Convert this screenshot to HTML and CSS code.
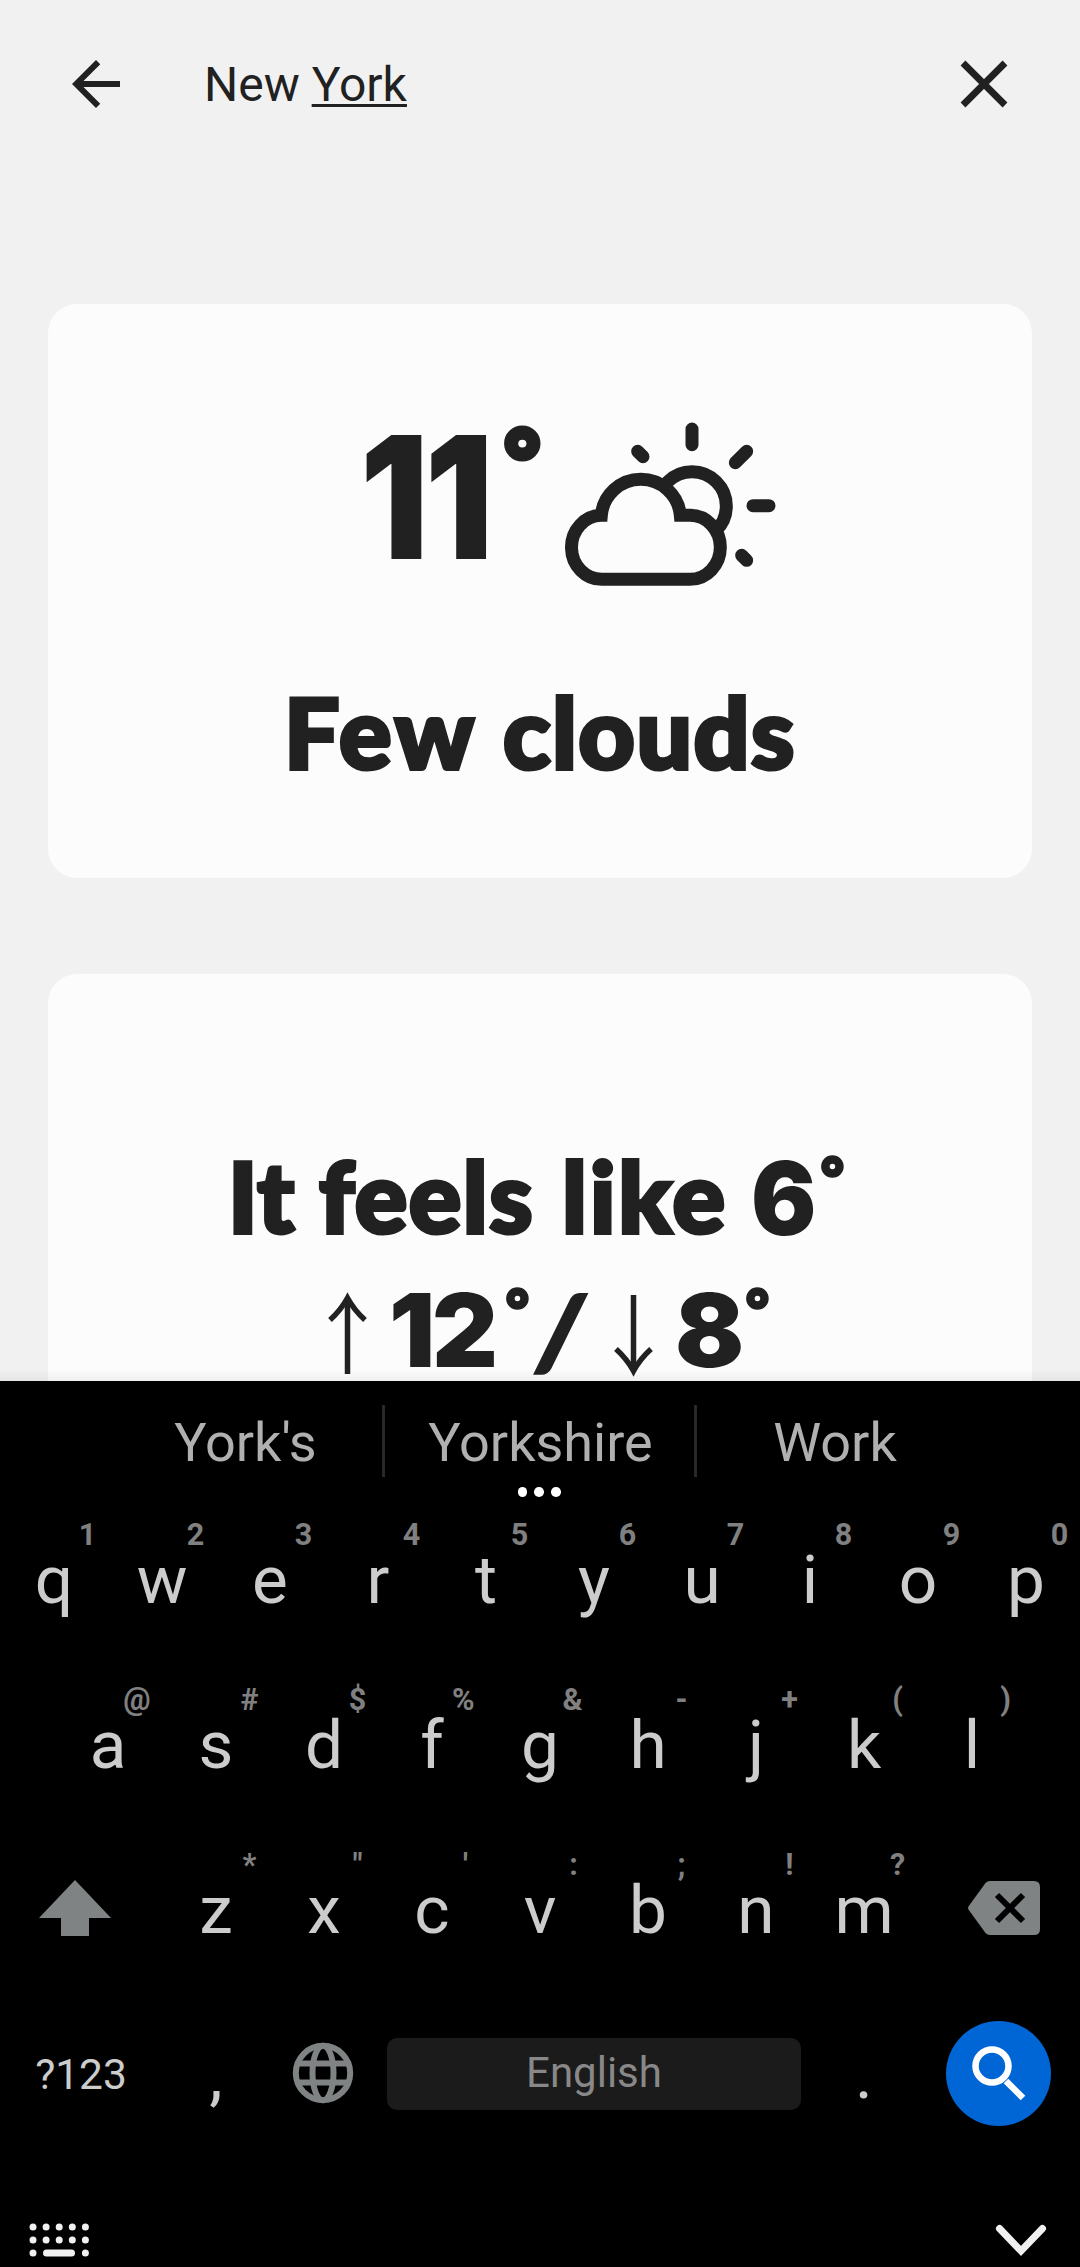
FILE: index.html
```html
<!DOCTYPE html>
<html lang="en">
<head>
<meta charset="utf-8">
<title>Weather</title>
<link rel="stylesheet" href="styles.css">
</head>
<body>
<div class="screen">
  <main class="app">
    <header class="search-bar">
      <svg class="back" viewBox="0 0 24 24"><path d="M20 11H7.83l5.59-5.59L12 4l-8 8 8 8 1.41-1.41L7.83 13H20z"/></svg>
      <div class="query">New <span class="composing">York</span></div>
      <svg class="close" viewBox="0 0 48 48"><path d="M3 3L45 45M45 3L3 45"/></svg>
    </header>

    <section class="card card-now">
      <div class="now">
        <span class="temp">11</span><span class="deg deg-big">°</span>
        <svg class="weather" viewBox="660 60 660 516">
          <circle cx="1056" cy="318" r="103"/>
          <path class="cloud" d="M787 538H1050A91 96 0 0 0 1050 346H1021A119 119 0 0 0 784 346A91 96 0 0 0 787 538Z"/>
          <path class="rays" d="M1056 87V134M893 154L909 170M1220 154L1186 188M1239 317H1287M1205 466L1220 481"/>
        </svg>
      </div>
      <div class="condition"><span class="w-few">Few</span><span class="w-clouds">clouds</span></div>
    </section>

    <section class="card card-feels">
      <div class="feels">
        <span class="w-it">It</span><span class="w-feels">feels</span><span class="w-like">like</span><span class="num">6</span><span class="deg">°</span>
      </div>
      <div class="range">
        <svg class="arrow" viewBox="0 0 39 79"><path d="M19.500 4V79"/><path d="M2 25Q13 15 19.500 3Q26 15 37 25"/></svg>
        <span class="num">12</span><span class="deg">°</span><span class="slash">/</span>
        <svg class="arrow down" viewBox="0 0 39 79"><path d="M19.500 4V79"/><path d="M2 25Q13 15 19.500 3Q26 15 37 25"/></svg>
        <span class="num">8</span><span class="deg">°</span>
      </div>
    </section>
  </main>

  <section class="keyboard">
    <div class="suggestions">
      <span>York's</span><span>Yorkshire</span><span>Work</span>
      <div class="more"><i></i><i></i><i></i></div>
    </div>
    <div class="row">
      <div class="key">q<sup>1</sup></div><div class="key">w<sup>2</sup></div><div class="key">e<sup>3</sup></div><div class="key">r<sup>4</sup></div><div class="key">t<sup>5</sup></div><div class="key">y<sup>6</sup></div><div class="key">u<sup>7</sup></div><div class="key">i<sup>8</sup></div><div class="key">o<sup>9</sup></div><div class="key">p<sup>0</sup></div>
    </div>
    <div class="row">
      <div class="key">a<sup>@</sup></div><div class="key">s<sup>#</sup></div><div class="key">d<sup>$</sup></div><div class="key">f<sup>%</sup></div><div class="key">g<sup>&amp;</sup></div><div class="key">h<sup>-</sup></div><div class="key">j<sup>+</sup></div><div class="key">k<sup>(</sup></div><div class="key">l<sup>)</sup></div>
    </div>
    <div class="row">
      <div class="side shift"><svg width="72" height="56" viewBox="0 0 72 56"><path d="M36 0L72 38H50V56H22V38H0Z"/></svg></div>
      <div class="key">z<sup>*</sup></div><div class="key">x<sup>"</sup></div><div class="key">c<sup>'</sup></div><div class="key">v<sup>:</sup></div><div class="key">b<sup>;</sup></div><div class="key">n<sup>!</sup></div><div class="key">m<sup>?</sup></div>
      <div class="side erase"><svg width="72" height="54" viewBox="0 0 72 54"><path d="M22 0H66Q72 0 72 6V48Q72 54 66 54H22Q19 54 17.500 52L.8 29Q-.6 27 .8 25L17.500 2Q19 0 22 0Z"/><path class="cut" d="M29 14L55 40M55 14L29 40"/></svg></div>
    </div>
    <div class="row">
      <div class="side symbols">?123</div>
      <div class="key">,</div>
      <div class="key globe"><svg width="62" height="62" viewBox="0 0 62 62"><circle cx="31" cy="31" r="27.200"/><ellipse cx="31" cy="31" rx="10.500" ry="27.200"/><path d="M6 21.500H56M6 40.500H56"/></svg></div>
      <div class="space">English</div>
      <div class="key">.</div>
      <div class="side go"><div class="search"><svg width="106" height="106" viewBox="0 0 106 106"><circle cx="46" cy="45" r="16.500"/><path d="M60 60L77 77"/></svg></div></div>
    </div>
    <footer class="nav">
      <svg class="ime" width="62" height="32" viewBox="0 0 62 32"><path d="M4 4h.01M17.100 4h.01M30.200 4h.01M43.300 4h.01M56.400 4h.01M4 17h.01M17.100 17h.01M30.200 17h.01M43.300 17h.01M56.400 17h.01M4 30h.01M56.400 30h.01M17.500 30H42.500"/></svg>
      <svg class="hide" width="52" height="32" viewBox="0 0 52 32"><path d="M4.500 5.500L26 28L47.500 5.500"/></svg>
    </footer>
  </section>
</div>
</body>
</html>
```
FILE: styles.css
```css
* { box-sizing: border-box; }
body { margin: 0; font-family: Roboto, "Liberation Sans", sans-serif; }
svg { display: block; flex: none; overflow: visible; }

.screen { width: 1080px; height: 2267px; display: flex; flex-direction: column; overflow: hidden; background: #f1f1f1; color: #212121; }
.app { height: 1381px; padding: 0 48px; overflow: hidden; display: flex; flex-direction: column; position: relative; }
.app::after { content: ""; position: absolute; left: 0; right: 0; bottom: 0; height: 12px; background: linear-gradient(transparent, rgba(0, 0, 0, .05)); }

.search-bar { height: 168px; flex: none; display: flex; align-items: center; padding: 0 24px 0 12px; }
.back { width: 72px; height: 72px; fill: #212121; }
.query { margin-left: 72px; padding-top: 2px; flex: 1; font-size: 48px; line-height: 60px; }
.composing { text-decoration: underline; text-decoration-thickness: 2.5px; text-underline-offset: 3px; }
.close { width: 48px; height: 48px; fill: none; stroke: #212121; stroke-width: 6.8; }

.card { background: #fcfcfc; border-radius: 29px; flex: none; font-family: Lato, "Open Sans", sans-serif; font-weight: 900; white-space: nowrap; }
.card-now { margin-top: 136px; height: 574px; }
.card-feels { margin-top: 96px; height: 574px; padding-top: 158px; }

.now { height: 255px; padding: 116px 0 0 312px; display: flex; }
.temp { width: 141px; font: 900 170px/155px Inter, sans-serif; letter-spacing: -4px; transform: scaleX(.89); transform-origin: left; }
.deg-big.deg { width: 59px; font-size: 92px; line-height: 81px; -webkit-text-stroke: 3px #212121; }
.weather { width: 220px; height: 172px; fill: #fcfcfc; stroke: #212121; stroke-width: 39; }
.rays { stroke-linecap: round; fill: none; }

.condition, .feels, .range { font-size: 98px; line-height: 132px; display: flex; }
.condition { padding: 109px 0 0 236px; }
.condition span, .w-it, .w-feels, .w-like, .slash { -webkit-text-stroke: 4px #212121; }
.condition span, .w-it, .w-feels, .w-like { line-height: 127px; }
.w-few { width: 219px; letter-spacing: 4px; }
.w-clouds { letter-spacing: 1.5px; }
.feels { padding-left: 180px; height: 132px; }
.w-it { width: 91px; letter-spacing: 1px; }
.w-feels { width: 243px; letter-spacing: 1.5px; }
.w-like { width: 189px; letter-spacing: 3px; }
.num, .deg { font-family: Inter, sans-serif; }
.num { font-size: 102px; letter-spacing: -3px; }
.deg { font-size: 58px; line-height: 90px; width: 34px; -webkit-text-stroke: 1.5px #212121; }
.feels .num { width: 68px; transform: scaleX(.95); transform-origin: left; }
.range { padding-left: 280px; }
.arrow { width: 39px; height: 79px; margin: 31px 22px 0 0; fill: none; stroke: #212121; stroke-width: 5.5; }
.range .num { width: 115px; }
.slash { width: 76px; transform: skewX(-6deg); }
.down { transform: rotate(180deg); }
.range .down ~ .num { width: 69px; }

.keyboard { height: 886px; background: #000; color: #ccc; display: flex; flex-direction: column; }
.suggestions { height: 121px; padding: 24px 84px 0 107px; display: grid; grid-template-columns: 275px 312px 277px; position: relative; color: #b0b0b0; font-size: 54px; line-height: 76px; text-align: center; }
.suggestions span { height: 72px; padding-left: 2px; }
.suggestions span + span { border-left: 3px solid #292929; }
.more { position: absolute; left: 517.500px; top: 106px; display: flex; gap: 7.4px; }
.more i { width: 9.600px; height: 9.600px; border-radius: 50%; background: #fff; }

.row { height: 165px; display: flex; justify-content: center; }
.key { width: 108px; position: relative; text-align: center; font-size: 67.5px; line-height: 156px; }
.key sup { position: absolute; top: 15px; right: 11.5px; min-width: 18px; font-size: 30.5px; line-height: 36px; font-weight: 700; color: #808080; text-align: center; vertical-align: baseline; }
.side { width: 162px; display: flex; }
.shift { padding: 48px 0 0 39px; fill: #7f8384; }
.erase { padding: 49px 0 0 50px; fill: #7f8384; }
.cut { stroke: #000; stroke-width: 6; fill: none; }
.symbols { justify-content: center; font-size: 42.5px; line-height: 155px; }
.globe { padding: 45px 0 0 22px; }
.globe svg { fill: none; stroke: #7f8384; stroke-width: 6; }
.space { width: 414px; height: 72px; margin: 41px 9px 0; border-radius: 10px; background: #1b1b1b; color: #888; font-size: 42px; line-height: 70px; text-align: center; }
.go { padding: 24px 0 0 28px; }
.search { width: 105px; height: 105px; border-radius: 50%; background: #0066d6; }
.search svg { fill: none; stroke: #fff; stroke-width: 6.5; }

.nav { height: 105px; padding: 61px 33px 0 29px; display: flex; justify-content: space-between; }
.nav svg { fill: none; stroke: #f1f1f1; stroke-width: 7; stroke-linecap: round; }
```
